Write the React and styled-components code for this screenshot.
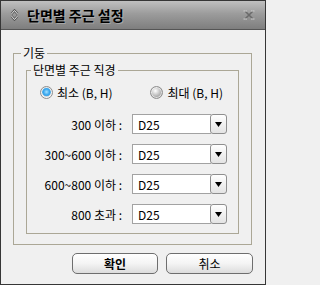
import React, { useState } from 'react';
import styled, { createGlobalStyle } from 'styled-components';

const GlobalStyle = createGlobalStyle`
  html, body {
    margin: 0;
    padding: 0;
    background: #f0f0f0;
  }
  body {
    font-family: "Noto Sans CJK KR", "Noto Sans", "Liberation Sans", sans-serif;
    font-size: 12px;
    color: #000;
  }
`;

const Window = styled.div`
  width: 266px;
  height: 285px;
  box-sizing: border-box;
  border: 1px solid #363636;
  display: flex;
  flex-direction: column;
  background: #f0f0f0;
`;

const TitleBar = styled.div`
  height: 28px;
  flex: none;
  display: flex;
  align-items: center;
  padding: 0 10px 0 9px;
  background: linear-gradient(#c0c0c0, #9c9c9c 45%, #7e7e7e);
  border-bottom: 1px solid #555;
`;

const Title = styled.div`
  flex: 1;
  margin-left: 8px;
  font-size: 14px;
  font-weight: bold;
  line-height: 16px;
  text-shadow: 1px 1px 0 rgba(255, 255, 255, 0.25);
`;

const Body = styled.div`
  flex: 1;
  display: flex;
  flex-direction: column;
  padding: 16px 13px 0 12px;
`;

const Group = styled.fieldset`
  margin: 0;
  border: 1px solid #aba796;
  padding: ${({ $pad }) => $pad};
  min-width: 0;
`;

const Legend = styled.legend`
  font-size: 12px;
  line-height: 14px;
  padding: 0 2px;
  margin-left: ${({ $offset }) => $offset}px;
`;

const RadioRow = styled.div`
  height: 16px;
  display: flex;
  align-items: center;
  justify-content: space-between;
  padding: 0 15px 0 1px;
  margin-bottom: 14px;
`;

const RadioLabel = styled.label`
  display: flex;
  align-items: center;
  gap: 4px;
  cursor: pointer;
`;

const RadioDot = styled.span`
  width: 13px;
  height: 13px;
  box-sizing: border-box;
  border-radius: 50%;
  border: 1px solid #8e8e8e;
  background: ${({ $checked }) =>
    $checked
      ? 'radial-gradient(circle at 50% 45%, #a6e2ff 0, #38a6ee 3px, #4aa9e6 4px, #cfd6db 4.6px, #f2f2f2 6px)'
      : 'radial-gradient(circle at 40% 35%, #ffffff 0, #d6d6d6 3px, #acacac 6px)'};
  box-shadow: inset 0 0 0 1px rgba(255, 255, 255, 0.6);
`;

const Rows = styled.div`
  display: flex;
  flex-direction: column;
  gap: 10px;
`;

const Row = styled.div`
  height: 20px;
  display: flex;
  align-items: center;
  justify-content: flex-end;
  gap: 10px;
  padding-right: 11px;
`;

const RowLabel = styled.span`
  white-space: nowrap;
`;

const Select = styled.div`
  width: 95px;
  height: 20px;
  display: flex;
  align-items: stretch;
`;

const SelectValue = styled.div`
  flex: 1;
  display: flex;
  align-items: center;
  padding-left: 5px;
  background: #fff;
  border: 1px solid #a2a2a2;
  border-right: none;
`;

const SelectArrow = styled.div`
  width: 17px;
  box-sizing: border-box;
  display: flex;
  align-items: center;
  justify-content: center;
  border: 1px solid #8e8e8e;
  border-radius: 3px;
  background: linear-gradient(#ffffff, #e4e4e4);
  margin-left: -1px;
`;

const Buttons = styled.div`
  display: flex;
  justify-content: flex-end;
  gap: 8px;
  margin: 8px -1px 0 0;
`;

const Button = styled.button`
  width: ${({ $w }) => $w}px;
  height: 21px;
  padding: 0;
  font-family: inherit;
  font-size: 12px;
  font-weight: ${({ $primary }) => ($primary ? 'bold' : 'normal')};
  color: #000;
  border: 1px solid #6e6e6e;
  border-radius: 5px;
  background: linear-gradient(#ffffff, #f4f4f4 50%, #dcdcdc);
  cursor: pointer;
`;

const sizes = [
  { label: '300 이하 :', value: 'D25' },
  { label: '300~600 이하 :', value: 'D25' },
  { label: '600~800 이하 :', value: 'D25' },
  { label: '800 초과 :', value: 'D25' },
];

const SortIcon = () => (
  <svg width="9" height="12" viewBox="0 0 9 12">
    <path d="M1.5 5 L4.5 1.5 L7.5 5 M1.5 7 L4.5 10.5 L7.5 7" fill="none" stroke="#555" strokeWidth="2.4" />
    <path d="M1.5 5 L4.5 1.5 L7.5 5 M1.5 7 L4.5 10.5 L7.5 7" fill="none" stroke="#e6e6e6" strokeWidth="1" />
  </svg>
);

const CloseIcon = () => (
  <svg width="12" height="10" viewBox="0 0 12 10">
    <path d="M2 1 L10 9 M10 1 L2 9" stroke="#6a6a6a" strokeWidth="1.6" />
    <path d="M0.5 1 H4 M8 1 H11.5 M0.5 9 H4 M8 9 H11.5" stroke="#d0d0d0" strokeWidth="1" />
  </svg>
);

const App = () => {
  const [mode, setMode] = useState('min');

  return (
    <>
      <GlobalStyle />
      <Window>
        <TitleBar>
          <SortIcon />
          <Title>단면별 주근 설정</Title>
          <CloseIcon />
        </TitleBar>
        <Body>
          <Group $pad="3px 12px 10px 12px">
            <Legend $offset={-5}>기둥</Legend>
            <Group $pad="7px 0 9px 12px">
              <Legend $offset={-8}>단면별 주근 직경</Legend>
              <RadioRow>
                <RadioLabel onClick={() => setMode('min')}>
                  <RadioDot $checked={mode === 'min'} />
                  최소 (B, H)
                </RadioLabel>
                <RadioLabel onClick={() => setMode('max')}>
                  <RadioDot $checked={mode === 'max'} />
                  최대 (B, H)
                </RadioLabel>
              </RadioRow>
              <Rows>
                {sizes.map((s) => (
                  <Row key={s.label}>
                    <RowLabel>{s.label}</RowLabel>
                    <Select>
                      <SelectValue>{s.value}</SelectValue>
                      <SelectArrow>
                        <svg width="7" height="5" viewBox="0 0 7 5">
                          <path d="M0 0 H7 L3.5 5 Z" fill="#000" />
                        </svg>
                      </SelectArrow>
                    </Select>
                  </Row>
                ))}
              </Rows>
            </Group>
          </Group>
          <Buttons>
            <Button $w={86} $primary>확인</Button>
            <Button $w={87}>취소</Button>
          </Buttons>
        </Body>
      </Window>
    </>
  );
};

export default App;
